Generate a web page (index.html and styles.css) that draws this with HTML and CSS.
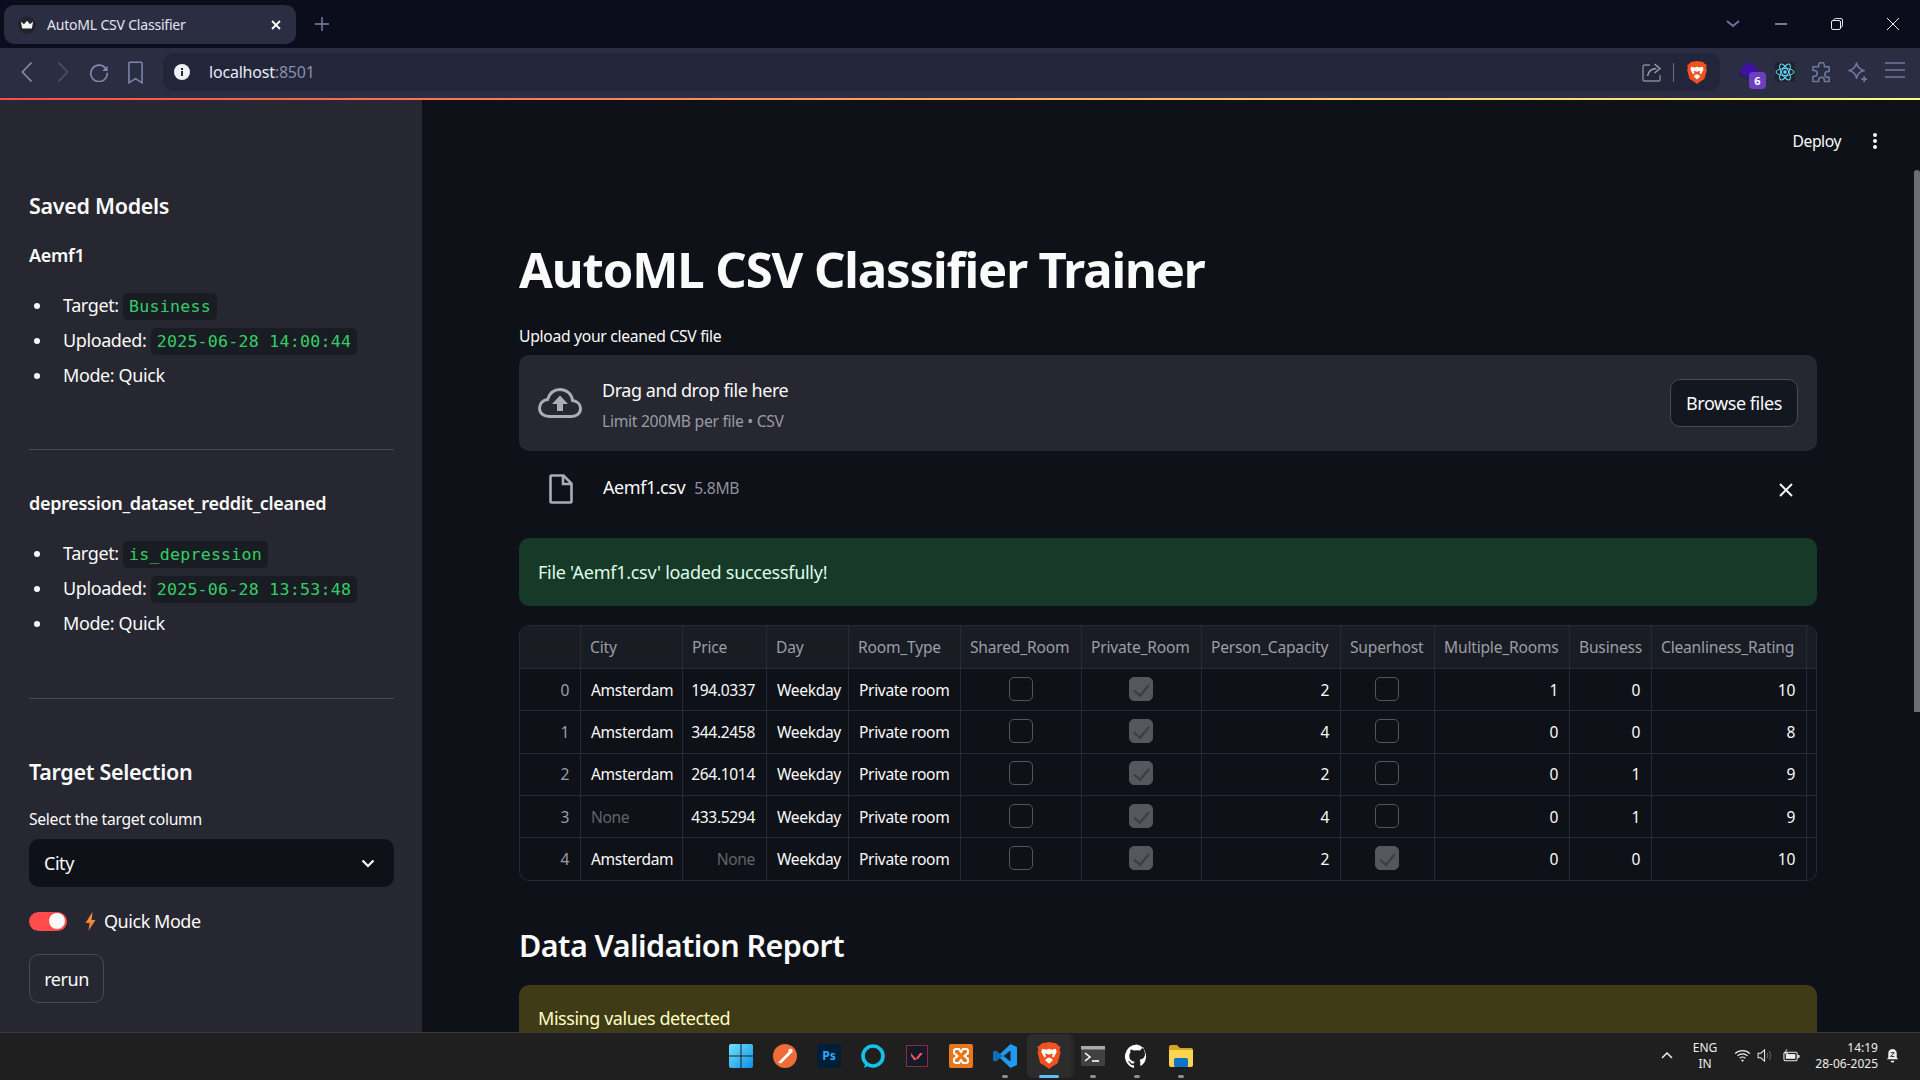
FILE: index.html
```html
<!DOCTYPE html>
<html lang="en">
<head>
<meta charset="utf-8">
<title>AutoML CSV Classifier</title>
<link rel="stylesheet" href="styles.css">
</head>
<body>
<svg class="defs" width="0" height="0" aria-hidden="true">
  <symbol id="brave" viewBox="0 0 24 28">
    <path fill="#f1501f" d="M12 0l5 1 2 0 3 3 2 1-1 3 1 3-3 11-5 3-4 3-4-3-5-3L0 11l1-3-1-3 2-1 3-3 2 0z"/>
    <path fill="#fff" d="M5 7l4 1 3-1 3 1 4-1 1 3-3 6-2-1 1-3-4 1-4-1 1 3-2 1-3-6zM9.500 17l2.500-1 2.500 1 1.500 2-4 3.500-4-3.500z"/>
  </symbol>
</svg>

<header class="tabstrip">
  <div class="tab">
    <span class="favicon"><svg viewBox="0 0 16 16" width="14" height="14"><path fill="#f4f4f4" d="M1 4l3.500 3L8 3l3.500 4L15 4l-1.500 8h-11z"/></svg></span>
    <span class="tab-title">AutoML CSV Classifier</span>
    <svg class="tab-close" viewBox="0 0 12 12" width="12" height="12"><path d="M2 2l8 8M10 2l-8 8" stroke="#fff" stroke-width="1.800"/></svg>
  </div>
  <svg class="newtab" viewBox="0 0 14 14" width="14" height="14"><path d="M7 0v14M0 7h14" stroke="#7d84a8" stroke-width="1.400"/></svg>
  <div class="winctl">
    <span class="winbtn win-list"><svg viewBox="0 0 14 8" width="14" height="8"><path d="M1 1l6 5 6-5" fill="none" stroke="#6f7599" stroke-width="1.800"/></svg></span>
    <span class="winbtn"><svg viewBox="0 0 12 2" width="12" height="2"><path d="M0 1h12" stroke="#eee" stroke-width="1"/></svg></span>
    <span class="winbtn"><svg viewBox="0 0 12 12" width="12" height="12"><path d="M3 2.500V2a1.500 1.500 0 0 1 1.500-1.500H10A1.500 1.500 0 0 1 11.500 2v5.500A1.500 1.500 0 0 1 10 9h-.5" fill="none" stroke="#ddd"/><rect x=".5" y="2.500" width="9" height="9" rx="1.500" fill="none" stroke="#eee"/></svg></span>
    <span class="winbtn"><svg viewBox="0 0 12 12" width="12" height="12"><path d="M0 0l12 12M12 0L0 12" stroke="#eee" stroke-width="1"/></svg></span>
  </div>
</header>

<nav class="toolbar">
  <span class="navbtn"><svg viewBox="0 0 12 22" width="12" height="22"><path d="M10.500 1.500L1.500 11l9 9.500" fill="none" stroke="#7f88ad" stroke-width="1.800"/></svg></span>
  <span class="navbtn"><svg viewBox="0 0 12 22" width="12" height="22"><path d="M1.500 1.500l9 9.500-9 9.500" fill="none" stroke="#4a5070" stroke-width="1.800"/></svg></span>
  <span class="navbtn"><svg viewBox="0 0 22 22" width="20" height="20"><path d="M18.500 7.500A9 9 0 1 0 20 12" fill="none" stroke="#7f88ad" stroke-width="1.800"/><path d="M20.500 4v6h-6z" fill="#7f88ad"/></svg></span>
  <span class="navbtn"><svg viewBox="0 0 16 24" width="15" height="23"><path d="M1 2a1 1 0 0 1 1-1h12a1 1 0 0 1 1 1v21l-7-4.500L1 23z" fill="none" stroke="#7f88ad" stroke-width="1.600"/></svg></span>
  <div class="omnibox">
    <svg class="info" viewBox="0 0 16 16" width="16" height="16"><circle cx="8" cy="8" r="8" fill="#f0f0f5"/><rect x="7" y="7" width="2" height="5" fill="#23263a"/><rect x="7" y="4" width="2" height="2" fill="#23263a"/></svg>
    <span class="url">localhost<span class="port">:8501</span></span>
    <svg class="share" viewBox="0 0 20 20" width="20" height="20"><path d="M8 3H2.500A1.500 1.500 0 0 0 1 4.500v0V18a1 1 0 0 0 1 1h15a1 1 0 0 0 1-1v-5" fill="none" stroke="#85878f" stroke-width="1.400"/><path d="M5.500 14c1-5 4-7.500 9-7.500M12.500 2l5.500 4.500-5.500 4.500" fill="none" stroke="#9a9ca5" stroke-width="1.500"/></svg>
    <span class="sep"></span>
    <svg class="brave-s" width="20" height="23"><use href="#brave"/></svg>
  </div>
  <div class="exts">
    <span class="extbtn"><svg viewBox="0 0 20 18" width="20" height="18"><path fill="#3f10a8" d="M10 0l10 8-10 7L0 8z"/><path fill="#2f1180" d="M0 10l10 7 10-7v3l-10 5-10-5z"/></svg><span class="badge">6</span></span>
    <span class="extbtn"><svg viewBox="0 0 20 20" width="20" height="20"><rect width="20" height="20" rx="2" fill="#20232a"/><g fill="none" stroke="#61dafb" stroke-width="1"><ellipse cx="10" cy="10" rx="9" ry="3.500"/><ellipse cx="10" cy="10" rx="9" ry="3.500" transform="rotate(60 10 10)"/><ellipse cx="10" cy="10" rx="9" ry="3.500" transform="rotate(120 10 10)"/></g><circle cx="10" cy="10" r="1.800" fill="#61dafb"/></svg></span>
    <span class="extbtn"><svg viewBox="0 0 22 22" width="21" height="21"><path d="M8 3.500a3 3 0 0 1 6 0V5h5v5h-1.500a3 3 0 0 0 0 6H19v4.500H14V19a3 3 0 0 0-6 0v1.500H2V15h1.500a3 3 0 0 0 0-6H2V5h6z" fill="none" stroke="#6f78a0" stroke-width="1.600" stroke-linejoin="round"/></svg></span>
    <span class="extbtn"><svg viewBox="0 0 22 22" width="21" height="21"><path d="M10 1c1 5 3 7 8 8-5 1-7 3-8 8-1-5-3-7-8-8 5-1 7-3 8-8z" fill="none" stroke="#6f78a0" stroke-width="1.600" stroke-linejoin="round"/><path d="M18 15v6M15 18h6" stroke="#6f78a0" stroke-width="1.800"/></svg></span>
    <span class="extbtn ext-menu"><svg viewBox="0 0 20 16" width="20" height="16"><path d="M0 1h20M0 8h20M0 15h20" stroke="#6f78a0" stroke-width="1.500"/></svg></span>
  </div>
</nav>
<div class="decoration"></div>

<div class="app">
  <aside class="sidebar">
    <h3 class="side-h">Saved Models</h3>
    <h4 class="model-name">Aemf1</h4>
    <ul class="meta">
      <li>Target: <code>Business</code></li>
      <li>Uploaded: <code>2025-06-28 14:00:44</code></li>
      <li>Mode: Quick</li>
    </ul>
    <hr class="rule rule-a">
    <h4 class="model-name model-b">depression_dataset_reddit_cleaned</h4>
    <ul class="meta">
      <li>Target: <code>is_depression</code></li>
      <li>Uploaded: <code>2025-06-28 13:53:48</code></li>
      <li>Mode: Quick</li>
    </ul>
    <hr class="rule rule-b">
    <h3 class="side-h side-h2">Target Selection</h3>
    <label class="field-label side-label">Select the target column</label>
    <div class="select"><span>City</span><svg viewBox="0 0 14 9" width="14" height="9"><path d="M1.500 1.500L7 7l5.500-5.500" fill="none" stroke="#fafafa" stroke-width="2.200"/></svg></div>
    <div class="toggle-row">
      <span class="toggle"><span class="knob"></span></span>
      <svg class="bolt" viewBox="0 0 10 19" width="11" height="19"><defs><linearGradient id="bg" x1="0" y1="0" x2="0" y2="1"><stop offset="0" stop-color="#f6a33c"/><stop offset="1" stop-color="#f06a30"/></linearGradient></defs><path fill="url(#bg)" d="M7 0L0 11h4l-1 8 7-11H6z"/></svg>
      <span>Quick Mode</span>
    </div>
    <button class="btn rerun">rerun</button>
  </aside>

  <main class="main">
    <div class="topbar">
      <span class="deploy">Deploy</span>
      <svg class="dots" viewBox="0 0 4 16" width="4" height="16"><circle cx="2" cy="2" r="2" fill="#fafafa"/><circle cx="2" cy="8" r="2" fill="#fafafa"/><circle cx="2" cy="14" r="2" fill="#fafafa"/></svg>
    </div>
    <h1 class="title">AutoML CSV Classifier Trainer</h1>
    <label class="field-label upload-label">Upload your cleaned CSV file</label>
    <section class="dropzone">
      <svg class="cloud" viewBox="0 0 44 30" width="44" height="30"><path d="M11 28.500C5.500 28.500 1.500 25 1.500 20c0-4.500 3.500-8 8-8.500C11.500 5.500 16 1.500 22 1.500c7 0 12 5 12.500 11 4.500.5 8 3.500 8 8 0 5-4 8-9 8z" fill="none" stroke="#aaacb6" stroke-width="3"/><path d="M22 7.500l8 8.500h-5v7h-6v-7h-5z" fill="#aaacb6"/></svg>
      <div class="drop-text">
        <div class="drop-main">Drag and drop file here</div>
        <div class="drop-sub">Limit 200MB per file • CSV</div>
      </div>
      <button class="btn browse">Browse files</button>
    </section>
    <div class="filerow">
      <svg class="fileicon" viewBox="0 0 24 30" width="24" height="30"><path d="M2.500 1.500h12l8 8v18a1 1 0 0 1-1 1h-19a1 1 0 0 1-1-1v-25a1 1 0 0 1 1-1zM14 2v8h8" fill="none" stroke="#aaacb6" stroke-width="2.600"/></svg>
      <span class="filename">Aemf1.csv</span>
      <span class="filesize">5.8MB</span>
      <svg class="fileclose" viewBox="0 0 14 14" width="14" height="14"><path d="M1 1l12 12M13 1L1 13" stroke="#fafafa" stroke-width="1.900"/></svg>
    </div>
    <div class="alert success">File 'Aemf1.csv' loaded successfully!</div>

    <div class="grid">
      <div class="c h"></div><div class="c h">City</div><div class="c h">Price</div><div class="c h">Day</div><div class="c h">Room_Type</div><div class="c h">Shared_Room</div><div class="c h">Private_Room</div><div class="c h">Person_Capacity</div><div class="c h">Superhost</div><div class="c h">Multiple_Rooms</div><div class="c h">Business</div><div class="c h">Cleanliness_Rating</div><div class="c h end"></div>

      <div class="c idx">0</div><div class="c">Amsterdam</div><div class="c num">194.0337</div><div class="c">Weekday</div><div class="c">Private room</div><div class="c mid"><span class="cb"></span></div><div class="c mid"><span class="cb on"></span></div><div class="c num">2</div><div class="c mid"><span class="cb"></span></div><div class="c num">1</div><div class="c num">0</div><div class="c num">10</div><div class="c end"></div>

      <div class="c idx">1</div><div class="c">Amsterdam</div><div class="c num">344.2458</div><div class="c">Weekday</div><div class="c">Private room</div><div class="c mid"><span class="cb"></span></div><div class="c mid"><span class="cb on"></span></div><div class="c num">4</div><div class="c mid"><span class="cb"></span></div><div class="c num">0</div><div class="c num">0</div><div class="c num">8</div><div class="c end"></div>

      <div class="c idx">2</div><div class="c">Amsterdam</div><div class="c num">264.1014</div><div class="c">Weekday</div><div class="c">Private room</div><div class="c mid"><span class="cb"></span></div><div class="c mid"><span class="cb on"></span></div><div class="c num">2</div><div class="c mid"><span class="cb"></span></div><div class="c num">0</div><div class="c num">1</div><div class="c num">9</div><div class="c end"></div>

      <div class="c idx">3</div><div class="c none">None</div><div class="c num">433.5294</div><div class="c">Weekday</div><div class="c">Private room</div><div class="c mid"><span class="cb"></span></div><div class="c mid"><span class="cb on"></span></div><div class="c num">4</div><div class="c mid"><span class="cb"></span></div><div class="c num">0</div><div class="c num">1</div><div class="c num">9</div><div class="c end"></div>

      <div class="c idx last">4</div><div class="c last">Amsterdam</div><div class="c num none last">None</div><div class="c last">Weekday</div><div class="c last">Private room</div><div class="c mid last"><span class="cb"></span></div><div class="c mid last"><span class="cb on"></span></div><div class="c num last">2</div><div class="c mid last"><span class="cb on"></span></div><div class="c num last">0</div><div class="c num last">0</div><div class="c num last">10</div><div class="c end last"></div>
    </div>

    <h2 class="report">Data Validation Report</h2>
    <div class="alert warning">Missing values detected</div>
    <div class="scrollthumb"></div>
  </main>
</div>

<footer class="taskbar">
  <div class="task-icons">
    <span class="ti"><svg viewBox="0 0 24 24" width="24" height="24"><defs><linearGradient id="win" x1="0" y1="0" x2="1" y2="1"><stop offset="0" stop-color="#6fe3fb"/><stop offset="1" stop-color="#0f8fe6"/></linearGradient></defs><path fill="url(#win)" d="M0 2a2 2 0 0 1 2-2h9.500v11.500H0zM12.500 0H22a2 2 0 0 1 2 2v9.500H12.500zM0 12.500h11.500V24H2a2 2 0 0 1-2-2zM12.500 12.500H24V22a2 2 0 0 1-2 2h-9.500z"/></svg></span>
    <span class="ti"><svg viewBox="0 0 24 24" width="24" height="24"><circle cx="12" cy="12" r="12" fill="#ef6c39"/><path d="M5 18.500L16 7.500l2 2-10 10z" fill="#fff"/><circle cx="17.500" cy="7" r="2.200" fill="#fff"/></svg></span>
    <span class="ti"><span class="ps">Ps</span></span>
    <span class="ti"><svg viewBox="0 0 24 24" width="24" height="24"><circle cx="12" cy="12" r="10" fill="none" stroke="#12c2e9" stroke-width="3.600"/><path d="M3 24l2-7 4 4z" fill="#12c2e9"/></svg></span>
    <span class="ti"><svg viewBox="0 0 22 22" width="22" height="22"><rect x=".5" y=".5" width="21" height="21" fill="#141a28" stroke="#8f2b3a"/><path d="M5 8l6 7h-3L5 11zM17 8l-5 6h-1l-1-1 4-5z" fill="#f0525f"/></svg></span>
    <span class="ti"><svg viewBox="0 0 24 24" width="24" height="24"><rect width="24" height="24" rx="2" fill="#e5771f"/><path d="M7 5h3l2 3 2-3h3a2 2 0 0 1 2 2v2l-3.500 3 3.500 3v2a2 2 0 0 1-2 2h-3l-2-3-2 3H7a2 2 0 0 1-2-2v-2l3.500-3L5 9V7a2 2 0 0 1 2-2z" fill="none" stroke="#fff" stroke-width="2"/></svg></span>
    <span class="ti run"><svg viewBox="0 0 24 24" width="24" height="24"><path fill="#1f9cf0" d="M17.500 0L24 3v18l-6.500 3L7 14l-4.500 3.500L0 16v-8l2.500-1.500L7 10zM17.500 6.500L10.500 12l7 5.500z"/><path fill="#0a70b8" d="M0 8l2.500-1.500L7 10l3.500 2-3.500 2-4.500 3.500L0 16z"/></svg></span>
    <span class="ti ti-active"><svg width="24" height="27"><use href="#brave"/></svg><span class="active-bar"></span></span>
    <span class="ti run"><svg viewBox="0 0 24 20" width="24" height="20"><rect width="24" height="20" rx="1.500" fill="#414141"/><rect width="24" height="3.500" fill="#aaa"/><path d="M4 7l5 4-5 4" fill="none" stroke="#fff" stroke-width="1.600"/><path d="M11 15h7" stroke="#fff" stroke-width="1.600"/></svg></span>
    <span class="ti run"><svg viewBox="0 0 24 24" width="24" height="24"><path fill="#fff" d="M12 .5A12 12 0 0 0 8.200 23.900c.6.100.8-.3.800-.6v-2.100c-3.300.7-4-1.600-4-1.600-.6-1.400-1.400-1.800-1.400-1.800-1.100-.7.100-.7.100-.7 1.200.1 1.800 1.200 1.800 1.200 1.100 1.800 2.800 1.300 3.500 1 .1-.8.400-1.300.8-1.600-2.700-.3-5.500-1.300-5.500-5.900 0-1.300.5-2.400 1.200-3.200-.1-.3-.5-1.500.1-3.200 0 0 1-.3 3.300 1.200a11.500 11.500 0 0 1 6 0C17.700 3.100 18.700 3.400 18.700 3.400c.7 1.700.2 2.900.1 3.200.8.800 1.200 1.900 1.200 3.200 0 4.600-2.800 5.600-5.500 5.900.4.400.8 1.100.8 2.200v3.300c0 .3.200.7.800.6A12 12 0 0 0 12 .5z"/></svg></span>
    <span class="ti run"><svg viewBox="0 0 24 22" width="24" height="22"><path fill="#d9a520" d="M0 2a2 2 0 0 1 2-2h6l3 3h11a2 2 0 0 1 2 2v2H0z"/><path fill="#fbd54f" d="M0 5h24v15a2 2 0 0 1-2 2H2a2 2 0 0 1-2-2z"/><rect x="5" y="13" width="14" height="9" rx="1.500" fill="#0f73c8"/></svg></span>
  </div>
  <div class="tray">
    <svg class="tray-chev" viewBox="0 0 12 7" width="12" height="7"><path d="M1 6l5-5 5 5" fill="none" stroke="#eee" stroke-width="1.500"/></svg>
    <div class="lang"><div>ENG</div><div>IN</div></div>
    <svg class="t-wifi" viewBox="0 0 18 14" width="17" height="13"><path d="M1 5a11.500 11.500 0 0 1 16 0M3.500 7.500a8 8 0 0 1 11 0M6 10a4.500 4.500 0 0 1 6 0" fill="none" stroke="#eee" stroke-width="1.200"/><circle cx="9" cy="12.500" r="1.200" fill="#eee"/></svg>
    <svg class="t-vol" viewBox="0 0 18 14" width="17" height="13"><path d="M1 4.500h3L8 1v12L4 9.500H1z" fill="none" stroke="#eee" stroke-width="1.100"/><path d="M10.500 4.500a3.500 3.500 0 0 1 0 5M13 2.500a7 7 0 0 1 0 9" fill="none" stroke="#666" stroke-width="1.100"/></svg>
    <svg class="t-bat" viewBox="0 0 18 13" width="17" height="13"><rect x="1" y="3" width="14" height="9" rx="1.500" fill="none" stroke="#eee" stroke-width="1.100"/><rect x="3" y="5" width="10" height="5" fill="#eee"/><rect x="15.500" y="6" width="2" height="3" fill="#eee"/><path d="M4 0L2 4h3L3.500 7" fill="none" stroke="#eee"/></svg>
    <div class="clock"><div>14:19</div><div>28-06-2025</div></div>
    <svg class="t-bell" viewBox="0 0 16 16" width="15" height="15"><path d="M8 1a4.500 4.500 0 0 0-4.500 4.500V10L2 12h12l-1.500-2V5.500A4.500 4.500 0 0 0 8 1zM6 13.500a2 2 0 0 0 4 0z" fill="#eee"/><path d="M6 5h4L6 9h4" fill="none" stroke="#222" stroke-width="1"/></svg>
  </div>
</footer>
</body>
</html>
```

FILE: styles.css
```css
* { box-sizing: border-box; }
html, body { margin: 0; height: 100%; }
body {
  width: 1920px; height: 1080px; overflow: hidden;
  display: flex; flex-direction: column;
  background: #0e1117; color: #fafafa;
  font-family: "Noto Sans", sans-serif; font-size: 18px; letter-spacing: -0.45px;
}
.defs { position: absolute; }
svg { display: block; flex: none; }

/* browser chrome */
.tabstrip { height: 48px; flex: none; background: #0b0d1c; display: flex; align-items: center; padding-left: 4px; }
.tab { width: 292px; height: 39px; background: #2b2e43; border-radius: 10px; display: flex; align-items: center; padding: 0 14px 0 14px; margin-top: 1px; }
.favicon { width: 18px; height: 18px; border-radius: 50%; background: #23232a; display: flex; align-items: center; justify-content: center; }
.tab-title { margin: -1px 0 0 11px; font-size: 14px; letter-spacing: -0.2px; color: #e4e5ec; flex: 1; }
.newtab { margin-left: 19px; }
.winctl { margin-left: auto; margin-right: -1px; display: flex; align-items: center; height: 100%; }
.winbtn { width: 56px; display: flex; justify-content: center; }
.win-list { width: 40px; }
.toolbar { height: 50px; flex: none; background: #2b2e43; display: flex; align-items: center; padding: 0 7px 2px 9px; }
.navbtn { width: 36px; display: flex; justify-content: center; }
.omnibox { flex: 1; height: 38px; margin-left: 10px; background: #23263a; border-radius: 10px; display: flex; align-items: center; padding: 0 13px 0 11px; }
.url { margin-left: 19px; font-size: 16px; letter-spacing: -0.2px; color: #e8ebf5; }
.port { color: #8b90a6; }
.share { margin-left: auto; }
.sep { width: 1px; height: 19px; background: #6a6d80; margin: 0 13px 0 11px; }
.exts { display: flex; margin-left: 13px; }
.extbtn { width: 36px; display: flex; justify-content: center; position: relative; left: -2px; }
.ext-menu { left: 0; }
.badge { position: absolute; left: 18px; top: 10px; width: 17px; height: 17px; border-radius: 4px; background: #6b3fbf; color: #fff; font-size: 11px; font-weight: 700; line-height: 17px; text-align: center; letter-spacing: 0; }
.decoration { height: 2px; flex: none; background: linear-gradient(90deg, #ff4b4b, #fffd80); }

/* app */
.app { flex: 1; min-height: 0; display: flex; overflow: hidden; }
.sidebar { width: 422px; flex: none; background: #262730; padding: 91px 28px 0 29px; overflow: hidden; }
.side-h { margin: 0; font-size: 21.500px; line-height: 30px; font-weight: 600; letter-spacing: -0.3px; }
.side-h2 { margin-top: 58px; }
.model-name { margin: 19px 0 0; font-size: 18px; line-height: 30px; font-weight: 600; letter-spacing: -0.3px; }
.model-b { margin-top: 38px; }
.meta { margin: 18px 0 0; padding: 0 0 0 34px; list-style: none; }
.meta li { height: 35px; line-height: 35px; position: relative; font-size: 18px; letter-spacing: -0.4px; white-space: nowrap; }
.meta li::before { content: ""; position: absolute; left: -29px; top: 15px; width: 6px; height: 6px; border-radius: 50%; background: #fafafa; }
code { font-family: "DejaVu Sans Mono", monospace; font-size: 16.600px; letter-spacing: 0.25px; color: #33cf65; background: #1a1c24; padding: 4px 6px; border-radius: 5px; }
.rule { border: 0; height: 1px; background: #474852; margin: 0; }
.rule-a { margin-top: 56px; }
.rule-b { margin-top: 57px; }
.field-label { display: block; font-size: 15.700px; line-height: 24px; letter-spacing: -0.3px; }
.side-label { margin-top: 20px; }
.select { margin-top: 8px; height: 48px; border-radius: 10px; background: #0e1117; display: flex; align-items: center; justify-content: space-between; padding: 0 19px 0 15px; }
.toggle-row { margin-top: 19px; height: 30px; display: flex; align-items: center; }
.toggle { width: 38px; height: 19px; border-radius: 10px; background: #ff4b4b; display: flex; align-items: center; justify-content: flex-end; padding-right: 2px; }
.knob { width: 16px; height: 16px; border-radius: 50%; background: #fafafa; }
.bolt { margin: 0 8px 0 18px; }
.btn { font: inherit; letter-spacing: inherit; color: #fafafa; border: 1px solid #484a55; border-radius: 10px; cursor: pointer; }
.rerun { display: block; margin-top: 18px; width: 75px; height: 49px; padding: 0; background: #262730; }

/* main */
.main { flex: 1; min-width: 0; position: relative; padding: 0 103px 0 97px; overflow: hidden; background: #0e1117; }
.topbar { height: 82px; display: flex; align-items: center; justify-content: flex-end; margin-right: -103px; padding-right: 43px; }
.deploy { font-size: 15.700px; }
.dots { margin-left: 32px; }
.title { margin: 52px 0 0; font-size: 49px; line-height: 70px; font-weight: 700; letter-spacing: -1.1px; white-space: nowrap; }
.upload-label { margin-top: 20px; }
.dropzone { margin-top: 7px; height: 96px; border-radius: 10px; background: #262730; display: flex; align-items: center; padding: 0 19px; }
.drop-text { margin: 2px 0 0 20px; flex: 1; }
.drop-main { line-height: 30px; }
.drop-sub { font-size: 15.700px; line-height: 24px; margin-top: 4px; letter-spacing: -0.3px; color: #9a9ba3; }
.browse { width: 128px; height: 48px; padding: 0; background: #13171f; }
.filerow { height: 87px; display: flex; align-items: center; padding: 0 24px 12px 30px; }
.filename { margin: -3px 0 0 30px; }
.filesize { margin: -2px 0 0 9px; font-size: 15.700px; letter-spacing: -0.3px; color: #90919a; }
.fileclose { margin: 2px 0 0 auto; }
.alert { border-radius: 10px; padding: 0 19px; }
.success { height: 68px; line-height: 68px; background: #173928; color: #dffde9; letter-spacing: -0.28px; }

.grid { margin-top: 19px; width: 1298px; height: 256px; display: grid; border: 1px solid #262a32; border-radius: 10px; overflow: hidden;
  grid-template-columns: 61px 102px 84px 82px 112px 121px 120px 139px 94px 135px 82px 155px 9px;
  grid-template-rows: 43px repeat(5, 42.300px);
  font-size: 15.600px; letter-spacing: -0.35px; }
.c { border-right: 1px solid #262a32; border-bottom: 1px solid #262a32; padding: 0 11px 0 10px; display: flex; align-items: center; white-space: nowrap; overflow: hidden; }
.c.h { background: #1a1c24; color: #9b9ea8; padding: 0 10px 1px 9px; letter-spacing: -0.2px; align-items: flex-end; padding-bottom: 10px; }
.c.end { padding: 0; border-right: 0; }
.c.last { border-bottom: 0; }
.num { justify-content: flex-end; }
.idx { justify-content: flex-end; color: #9b9ea8; }
.none { color: #62646c; }
.mid { justify-content: center; padding: 0 1px 0 0; }
.cb { width: 24px; height: 24px; border-radius: 5px; border: 1px solid #54565e; position: relative; margin-top: -2px; }
.cb.on { background: #55575e; }
.cb.on::after { content: ""; position: absolute; left: 7px; top: 3px; width: 7px; height: 13px; border: solid #3b3d44; border-width: 0 2px 2px 0; transform: rotate(40deg); }

.report { margin: 42px 0 0; font-size: 30.500px; line-height: 44px; font-weight: 600; letter-spacing: -0.55px; }
.warning { margin-top: 18px; height: 120px; padding-top: 17px; line-height: 32px; background: #3e3b16; color: #ffffc2; }
.scrollthumb { position: absolute; right: 0; top: 70px; width: 6px; height: 542px; border-radius: 3px 3px 0 0; background: #6d6e74; }

/* taskbar */
.taskbar { height: 48px; flex: none; background: #1f1f1f; border-top: 1px solid #3a3a3a; display: flex; align-items: center; position: relative; letter-spacing: 0; padding-bottom: 2px; }
.task-icons { display: flex; margin-left: 719px; }
.ti { width: 44px; height: 44px; display: flex; align-items: center; justify-content: center; position: relative; }
.run::after { content: ""; position: absolute; left: 19px; bottom: 0; width: 6px; height: 3px; border-radius: 2px; background: #8e8e8e; }
.ps { width: 24px; height: 24px; border-radius: 3px; background: #001e36; color: #31a8ff; font-size: 12px; font-weight: 700; display: flex; align-items: center; justify-content: center; }
.ti-active { background: #2c2c2c; border-radius: 5px; box-shadow: 3px 0 0 #272727; }
.active-bar { position: absolute; bottom: 0; left: 12px; width: 20px; height: 3px; border-radius: 2px; background: #5bc3f2; }
.tray { margin-left: auto; display: flex; align-items: center; padding-right: 20px; color: #eee; font-size: 12px; }
.lang { width: 40px; margin-left: 12px; text-align: center; line-height: 16px; }
.t-wifi { margin-left: 9px; }
.t-vol { margin-left: 6px; }
.t-bat { margin-left: 9px; }
.clock { width: 70px; margin-left: 8px; text-align: right; line-height: 16px; white-space: nowrap; }
.t-bell { margin-left: 7px; }
```
